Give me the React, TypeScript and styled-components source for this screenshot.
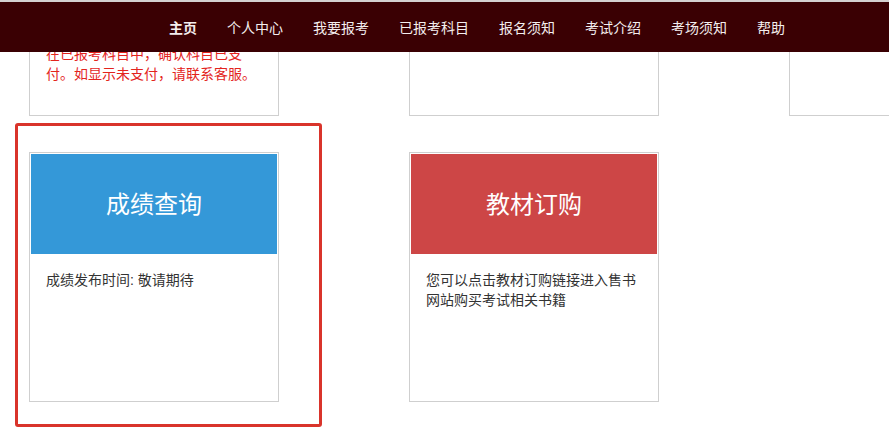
import React from "react";
import styled, { createGlobalStyle } from "styled-components";

type Tile = {
  title?: string;
  color?: string;
  lines: { text: string; warn?: boolean }[];
};

const GlobalStyle = createGlobalStyle`
  html, body {
    margin: 0;
    padding: 0;
    background: #fff;
  }
  html {
    overflow: hidden;
  }
  body {
    font-family: "Liberation Sans", "Noto Sans CJK SC", sans-serif;
  }
`;

const Header = styled.header`
  position: fixed;
  top: 0;
  left: 0;
  right: 0;
  z-index: 10;
  height: 50px;
  border-top: 2px solid #d4d0d0;
  background: #3a0003;
  display: flex;
  align-items: center;
  padding-left: 169px;
`;

const Nav = styled.nav`
  display: flex;
  gap: 30px;
`;

const NavLink = styled.a<{ $active?: boolean }>`
  color: #f4eeee;
  font-size: 14px;
  font-weight: ${(p) => (p.$active ? 700 : 400)};
  text-decoration: none;
  white-space: nowrap;
  cursor: pointer;
`;

const Content = styled.main`
  margin-top: -134px;
  padding: 0 0 40px 29px;
  display: grid;
  grid-template-columns: repeat(3, 250px);
  column-gap: 130px;
  row-gap: 36px;
  width: 1100px;
`;

const Card = styled.div`
  box-sizing: border-box;
  width: 250px;
  height: 250px;
  border: 1px solid #cfcfcf;
  padding: 1px;
  background: #fff;
`;

const CardHead = styled.div<{ $color: string }>`
  height: 100px;
  box-sizing: border-box;
  padding-bottom: 4px;
  background: ${(p) => p.$color};
  display: flex;
  align-items: center;
  justify-content: center;
  color: #fff;
  font-size: 24px;
`;

const CardBody = styled.div`
  padding: 16px 15px 0 15px;
  font-size: 14px;
  line-height: 20px;
  color: #333;
`;

const Line = styled.p<{ $warn?: boolean }>`
  margin: 0;
  white-space: nowrap;
  color: ${(p) => (p.$warn ? "#e3241d" : "#333")};
`;

const Highlight = styled.div`
  position: relative;
  &::after {
    content: "";
    position: absolute;
    left: -14px;
    top: -29px;
    width: 301px;
    height: 298px;
    border: 3px solid #d9342b;
    border-radius: 3px;
    pointer-events: none;
  }
`;

const navItems = [
  "主页",
  "个人中心",
  "我要报考",
  "已报考科目",
  "报名须知",
  "考试介绍",
  "考场须知",
  "帮助",
];

// first row is scrolled up under the fixed header
const firstRow: Tile[] = [
  {
    color: "#3fa34d",
    lines: [
      { text: "报考完成后请及时缴费" },
      { text: "缴费成功后请" },
      { text: "刷新页面" },
      { text: "在已报考科目中，确认科目已支", warn: true },
      { text: "付。如显示未支付，请联系客服。", warn: true },
    ],
  },
  { color: "#e08a2c", lines: [] },
  { color: "#8e5bb5", lines: [] },
];

const secondRow: Tile[] = [
  {
    title: "成绩查询",
    color: "#3498d8",
    lines: [{ text: "成绩发布时间: 敬请期待" }],
  },
  {
    title: "教材订购",
    color: "#cd4646",
    lines: [
      { text: "您可以点击教材订购链接进入售书" },
      { text: "网站购买考试相关书籍" },
    ],
  },
];

const TileCard: React.FC<{ tile: Tile }> = ({ tile }) => (
  <Card>
    <CardHead $color={tile.color ?? "#999"}>{tile.title}</CardHead>
    <CardBody>
      {tile.lines.map((l, i) => (
        <Line key={i} $warn={l.warn}>
          {l.text}
        </Line>
      ))}
    </CardBody>
  </Card>
);

export default function App() {
  return (
    <>
      <GlobalStyle />
      <Header>
        <Nav>
          {navItems.map((item, i) => (
            <NavLink key={item} $active={i === 0}>
              {item}
            </NavLink>
          ))}
        </Nav>
      </Header>
      <Content>
        {firstRow.map((t, i) => (
          <TileCard key={i} tile={t} />
        ))}
        <Highlight>
          <TileCard tile={secondRow[0]} />
        </Highlight>
        <TileCard tile={secondRow[1]} />
      </Content>
    </>
  );
}
